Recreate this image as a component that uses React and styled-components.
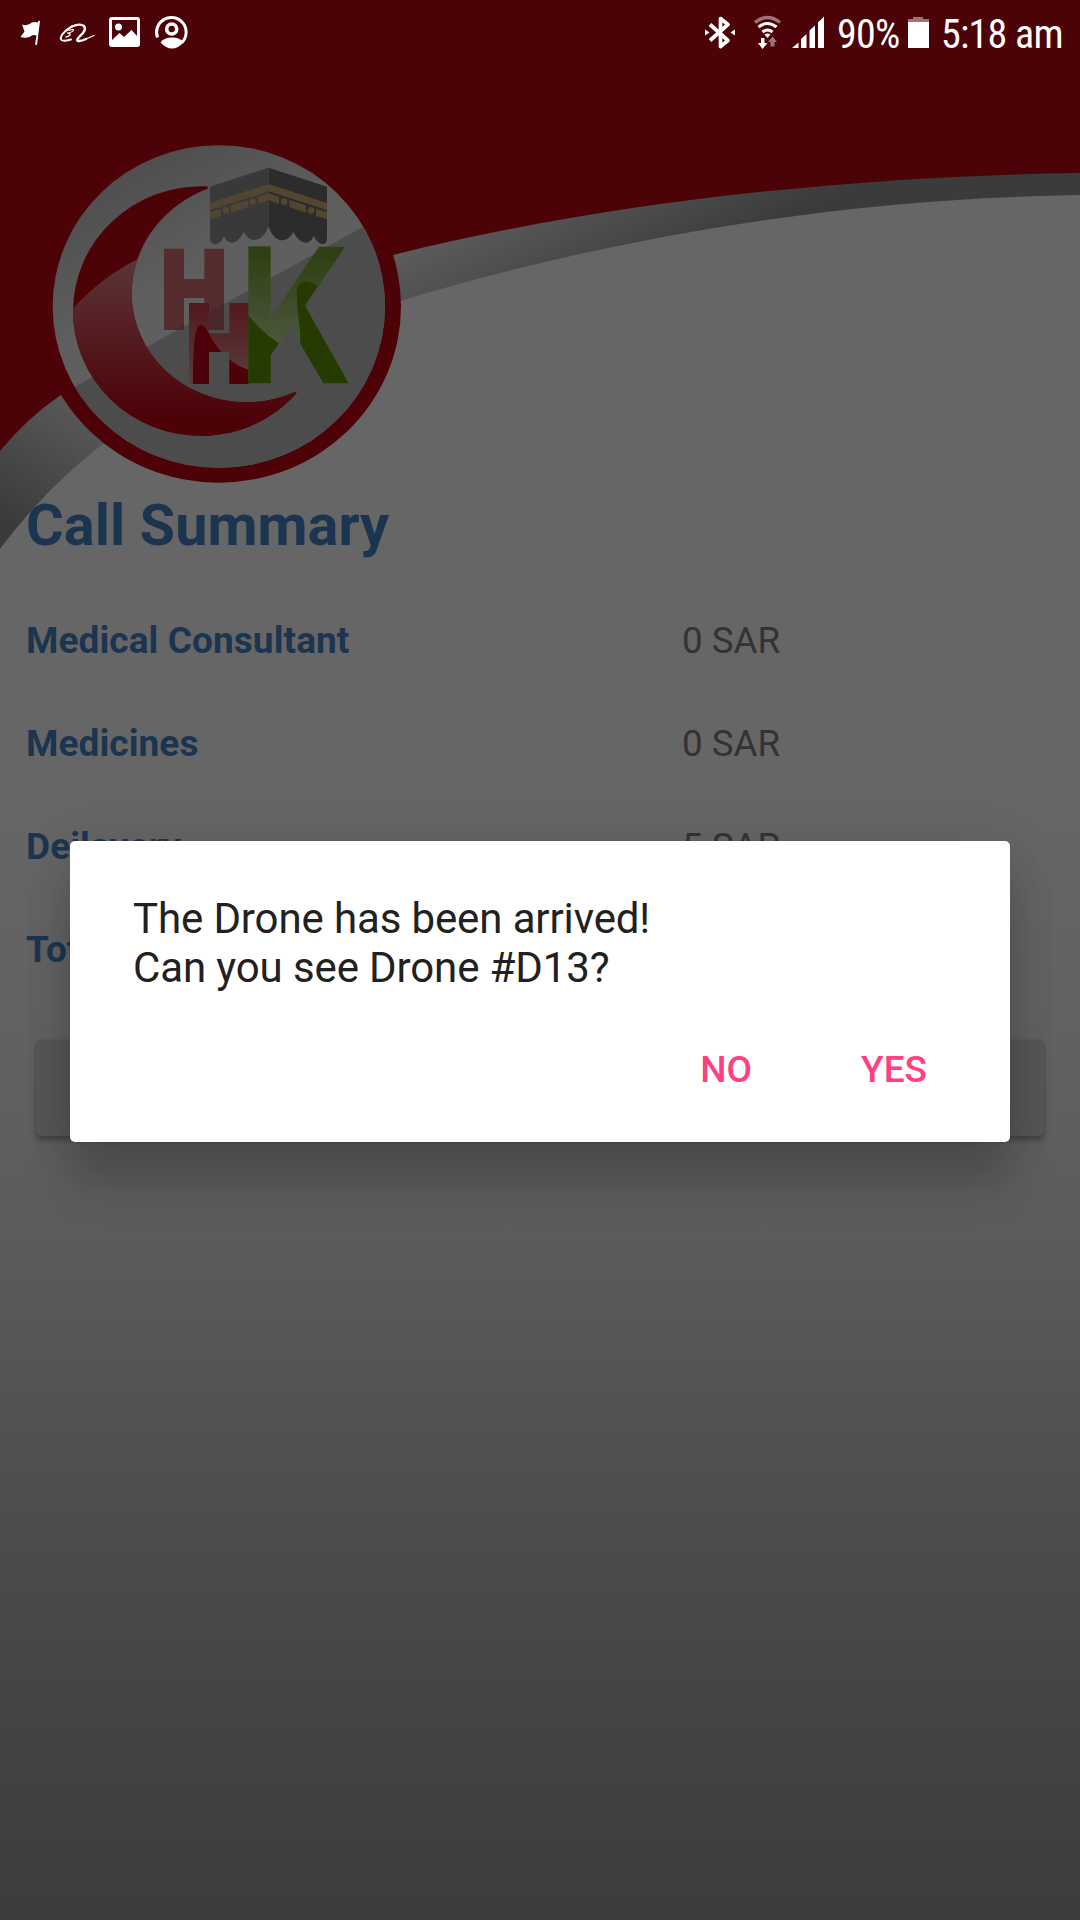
import React from "react";
import styled, { createGlobalStyle } from "styled-components";

const Global = createGlobalStyle`
  body { margin: 0; background: #3b3b3b; }
  * { box-sizing: border-box; }
`;

const Screen = styled.div`
  position: relative;
  width: 1080px;
  height: 1920px;
  overflow: hidden;
  display: flex;
  flex-direction: column;
  font-family: Roboto, "Liberation Sans", sans-serif;
  background: linear-gradient(180deg, #666 0, #666 780px, #606060 1080px, #5b5b5b 1240px, #525252 1414px, #4a4a4a 1571px, #434343 1728px, #3c3c3c 1920px);
`;

const Backdrop = styled.svg`
  position: absolute;
  top: 0;
  left: 0;
  width: 1080px;
  height: 560px;
`;

const StatusBar = styled.header`
  position: relative;
  display: flex;
  justify-content: space-between;
  height: 66px;
  padding: 0 18px 0 20px;
  color: #fff;
`;

const StatusGroup = styled.div`
  display: flex;
  align-items: center;
`;

const Glyph = styled.svg`
  flex: none;
  width: ${(p) => p.$w}px;
  height: 66px;
  margin-left: ${(p) => p.$gap || 0}px;
  overflow: visible;
`;

const StatusText = styled.span`
  width: ${(p) => p.$w}px;
  margin-left: ${(p) => p.$gap}px;
  font: 400 40px/66px "Roboto Condensed", Roboto, sans-serif;
  letter-spacing: -0.75px;
  white-space: nowrap;
  padding-top: 3px;
`;

const Summary = styled.main`
  position: relative;
  display: flex;
  flex-direction: column;
  padding: 425px 36px 0 26px;
`;

const Title = styled.h1`
  margin: 0 0 60px;
  font-size: 57.75px;
  line-height: 68px;
  font-weight: 700;
  color: #1b3550;
`;

const Row = styled.div`
  display: grid;
  grid-template-columns: 656px 1fr;
  height: 103px;
  font-size: 36.75px;
  line-height: 43px;
`;

const Label = styled.span`
  font-size: 37px;
  font-weight: 700;
  font-kerning: ${(p) => (p.$kerned ? "normal" : "none")};
  letter-spacing: 0.08px;
  color: #1b3550;
`;

const Value = styled.span`
  color: #333;
`;

const WideButton = styled.button`
  height: 96px;
  margin: 9px 0 0 10px;
  border: 0;
  border-radius: 5px;
  background: #565656;
  box-shadow: 0 5px 5px rgba(0, 0, 0, 0.25), 0 0 3px rgba(0, 0, 0, 0.15);
`;

const Dialog = styled.section`
  position: absolute;
  top: 841px;
  left: 70px;
  width: 940px;
  height: 301px;
  padding: 53px 63px 0;
  display: flex;
  flex-direction: column;
  background: #fff;
  border-radius: 5px;
  box-shadow: 0 42px 44px 1px rgba(0, 0, 0, 0.17), 0 4px 50px rgba(0, 0, 0, 0.1);
`;

const Message = styled.p`
  margin: 0;
  font-size: 42px;
  line-height: 49px;
  letter-spacing: -0.12px;
  color: #212121;
`;

const Actions = styled.div`
  display: flex;
  justify-content: flex-end;
  gap: 109px;
  margin: 56px 20px 0 0;
`;

const Action = styled.button`
  padding: 0;
  border: 0;
  background: none;
  font: 500 37px/43px Roboto, sans-serif;
  color: #ff4081;
`;

const rows = [
  ["Medical Consultant", "0 SAR"],
  ["Medicines", "0 SAR"],
  ["Deilavery", "5 SAR"],
  ["Total", "5 SAR"],
];

function Logo() {
  return (
    <g transform="translate(40 130) scale(.33333)">
      <ellipse cx="536" cy="529" rx="547" ry="529" fill="#4d0208" />
      <ellipse cx="536.5" cy="529.5" rx="498.5" ry="484" fill="url(#silver)" />
      <g clipPath="url(#disc)">
        <path d="M-5 831L1100 218V1110H-5Z" fill="#4c4c4c" />
      </g>
      <path id="crescent" d="M503 169A386 375 0 0 0 99 543A386 375 0 0 0 485 918C590 918 690 875 768 792Q772 785 763 787A345 327 0 0 1 620 817A345 327 0 0 1 275 490C275 350 370 225 503 176Z" fill="#4d0208" />
      <g clipPath="url(#moon)">
        <path d="M90 546Q180 442 300 384H800V930H90Z" fill="url(#moonShade)" />
      </g>
      <path d="M372 356H432V447H493V356H552V600H507V519H493V504H432V600H372Z" fill="#542c2e" />
      <path d="M507 546L552 520V600H507Z" fill="#49272a" />
      <path d="M400 600L432 586V600Z" fill="#49272a" />
      <path d="M447 519H507V610H568V519H627V762H568V666H507V762H447Z" fill="url(#hShade)" />
      <path d="M459 762C459 650 464 585 483 585C502 585 506 625 545 666H507V762Z" fill="#4d0208" />
      <path d="M568 688Q595 710 627 720V762H568Z" fill="#4d0208" />
      <path d="M625 349H692V565L837 350H916L795 527L926 760H850L752 592L692 676V760H625Z" fill="url(#kShade)" />
      <path d="M625 555Q670 612 717 640L692 676V760H625Z" fill="#263b02" />
      <path d="M780 640C785 600 768 540 771 480C775 448 808 448 833 468L795 527L926 760H850Z" fill="#263b02" />
      <path d="M510 170L686 113V290Q668 330 642 330Q625 330 611 306Q595 338 574 338Q560 338 552 318Q540 343 525 343Q512 343 510 325Z" fill="#393939" />
      <path d="M861 170L686 113V290Q700 331 729 331Q748 328 760 306Q778 338 797 338Q812 338 821 318Q835 343 850 343Q861 340 861 325Z" fill="#2c2c2c" />
      <g fill="#534630">
        <path d="M510 219L686 162L861 219V240L686 184L510 240Z" />
        <path d="M510 246L542 236V258L510 268ZM573 226L624 210V231L573 248ZM654 201L686 190L717 201V221L686 211L654 221ZM748 210L798 226V248L748 231ZM828 236L861 246V268L828 258Z" />
        <circle cx="557.5" cy="241" r="10" />
        <circle cx="638.5" cy="215" r="10" />
        <circle cx="732.5" cy="215" r="10" />
        <circle cx="813.5" cy="241" r="10" />
      </g>
    </g>
  );
}

function Header() {
  return (
    <Backdrop viewBox="0 0 1080 560">
      <defs>
        <linearGradient id="bandLeft" gradientUnits="userSpaceOnUse" x1="15" y1="530" x2="100" y2="400">
          <stop offset="0" stopColor="#3a3a3a" />
          <stop offset="1" stopColor="#5c5c5c" />
        </linearGradient>
        <linearGradient id="bandRight" gradientUnits="userSpaceOnUse" x1="394" y1="254" x2="460" y2="384">
          <stop offset="0" stopColor="#5c5c5c" />
          <stop offset="1" stopColor="#3b3b3b" />
        </linearGradient>
        <linearGradient id="silver" gradientUnits="userSpaceOnUse" x1="330" y1="60" x2="520" y2="400">
          <stop offset="0" stopColor="#4f4d4d" />
          <stop offset="1" stopColor="#5f5f5f" />
        </linearGradient>
        <linearGradient id="moonShade" gradientUnits="userSpaceOnUse" x1="0" y1="390" x2="0" y2="860">
          <stop offset="0" stopColor="#5a3537" />
          <stop offset="1" stopColor="#4d0208" />
        </linearGradient>
        <linearGradient id="hShade" gradientUnits="userSpaceOnUse" x1="0" y1="530" x2="0" y2="740">
          <stop offset="0" stopColor="#531a1e" />
          <stop offset="1" stopColor="#5a3a3c" />
        </linearGradient>
        <linearGradient id="kShade" gradientUnits="userSpaceOnUse" x1="0" y1="380" x2="0" y2="640">
          <stop offset="0" stopColor="#2f4114" />
          <stop offset="1" stopColor="#4c573d" />
        </linearGradient>
        <clipPath id="disc"><ellipse cx="536.5" cy="529.5" rx="498.5" ry="484" /></clipPath>
        <clipPath id="moon"><use href="#crescent" /></clipPath>
      </defs>
      <path d="M0 0H1080V174C850 177 600 204 394 255.500C280 286 140 338 61 395.500Q28 418 0 452Z" fill="#4b0307" />
      <path d="M0 451Q28 417 61 395Q140 337 250 297V354C180 385 140 412 103 444C60 477 28 512 0 549Z" fill="url(#bandLeft)" />
      <path d="M250 297Q310 276 394 254.700C600 203 850 176 1080 173V195C850 198 620 235 401 300.700Q320 326 250 354Z" fill="url(#bandRight)" />
      <Logo />
    </Backdrop>
  );
}

export default function App() {
  return (
    <Screen>
      <Global />
      <Header />
      <StatusBar>
        <StatusGroup>
          <Glyph $w={21} viewBox="20 0 21 66" fill="#fff">
            <path d="M38.500 20.500L40 21L37 45L35 44.500L36.500 35.500Q33 34 29.500 37Q25 38.500 20.500 37L24.500 31.500L22 24.500Q26 26 29.500 24Q33 21 38 22.500Z" />
          </Glyph>
          <Glyph $w={36} $gap={18} viewBox="59 0 36 66" fill="none" stroke="#fff" strokeLinecap="round">
            <path strokeWidth="2" d="M72 26.500Q69 28 65 31.500Q60 36 61 39.500Q62 42 71 39.500" />
            <path strokeWidth="2.400" d="M72 26.500Q80 23 84 26Q87 30 80 36Q75 41 79 41Q82 41 86 39" />
            <path strokeWidth="1.200" d="M86 39L94 35.500M69 30.500Q74 28.500 73.500 30.500Q72 32.500 67 33Q71 33 70 35Q68 37 65.500 37" />
          </Glyph>
          <Glyph $w={31} $gap={14} viewBox="109 0 31 66">
            <path fill="#fff" fillRule="evenodd" d="M112 17H137Q140 17 140 20V44Q140 47 137 47H112Q109 47 109 44V20Q109 17 112 17ZM112 20V40L119.500 33L124 37L131.500 30L137 36V20Z" />
            <circle cx="118.500" cy="27" r="3.500" fill="#fff" />
          </Glyph>
          <Glyph $w={33} $gap={15} viewBox="155 0 33 66" fill="none" stroke="#fff" strokeWidth="3">
            <path d="M157.500 37.500A14.800 14.800 0 1 1 182 42.500" />
            <circle cx="171.700" cy="29" r="5" strokeWidth="3.600" />
            <path fill="#fff" stroke="none" d="M160.500 42.500Q164 37.500 172 37.500Q180 37.500 183.500 42.500Q178 48.500 172 48.500Q166 48.500 160.500 42.500Z" />
          </Glyph>
        </StatusGroup>
        <StatusGroup>
          <Glyph $w={31} viewBox="705 0 31 66" fill="none" stroke="#fff" strokeWidth="3.700">
            <path strokeLinejoin="round" d="M710 24.500L728 40.500L720.500 46.500V18.500L728 24.500L710 40.500" />
            <path fill="#fff" stroke="none" d="M705 29.500L709.500 32.500L705 35.500ZM735 29.500L730.500 32.500L735 35.500Z" />
          </Glyph>
          <Glyph $w={27} $gap={18} viewBox="754 0 27 66" fill="none" stroke="#fff" strokeWidth="3">
            <path opacity=".45" strokeWidth="3.400" d="M755 22.500Q767.500 12.500 780 22.500" />
            <path d="M758.500 27Q767.500 20 776.500 27M762.500 32Q767.500 28 772.500 32" />
            <path fill="#fff" stroke="none" d="M764.500 34.500Q767.500 32.500 770.500 34.500L767.500 38ZM761 38H764.500V43H767.500L762.500 49L758 43H761Z" />
            <path opacity=".45" fill="#fff" stroke="none" d="M772.500 36.500L777 42H774.500V46.500H770.500V42H768Z" />
          </Glyph>
          <Glyph $w={32} $gap={11} viewBox="792 0 32 66" fill="#fff">
            <path d="M792 48L798.500 42.500V48ZM801 48V39L806.500 34V48ZM809.500 48V30.500L815 25.500V48ZM818 48V22.500L824 16.500V48Z" />
          </Glyph>
          <StatusText $w={64} $gap={13}>90%</StatusText>
          <Glyph $w={21} $gap={7} viewBox="908 0 21 66" fill="#fff">
            <path opacity=".45" d="M908 19H913V17H923V19H929V22H908Z" />
            <path d="M908 22H929V48H908Z" />
          </Glyph>
          <StatusText $w={121} $gap={12}>5:18 am</StatusText>
        </StatusGroup>
      </StatusBar>
      <Summary>
        <Title>Call Summary</Title>
        {rows.map(([label, value]) => (
          <Row key={label}>
            <Label $kerned={label === "Total"}>{label}</Label>
            <Value>{value}</Value>
          </Row>
        ))}
        <WideButton aria-label="Continue" />
      </Summary>
      <Dialog role="dialog">
        <Message>
          The Drone has been arrived!
          <br />
          Can you see Drone #D13?
        </Message>
        <Actions>
          <Action>NO</Action>
          <Action>YES</Action>
        </Actions>
      </Dialog>
    </Screen>
  );
}
